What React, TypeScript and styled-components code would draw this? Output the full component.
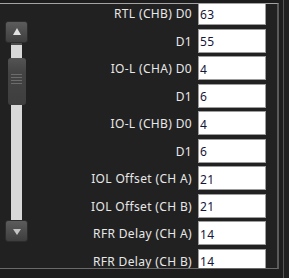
import React from 'react'
import styled, { createGlobalStyle } from 'styled-components'

const GlobalStyle = createGlobalStyle`
  html, body {
    margin: 0;
    padding: 0;
    background: #1d1d1d;
  }
`;

const rows: { label: string; value: string }[] = [
  { label: 'RTL (CHB) D0', value: '63' },
  { label: 'D1', value: '55' },
  { label: 'IO-L (CHA) D0', value: '4' },
  { label: 'D1', value: '6' },
  { label: 'IO-L (CHB) D0', value: '4' },
  { label: 'D1', value: '6' },
  { label: 'IOL Offset (CH A)', value: '21' },
  { label: 'IOL Offset (CH B)', value: '21' },
  { label: 'RFR Delay (CH A)', value: '14' },
  { label: 'RFR Delay (CH B)', value: '14' },
];

const Screen = styled.div`
  display: flex;
  width: 289px;
  height: 278px;
  overflow: hidden;
  background: #1d1d1d;
  font-family: "Noto Sans", "Liberation Sans", sans-serif;
`;

const Panel = styled.div`
  display: flex;
  width: 279px;
  height: 266px;
  margin-top: 3px;
  box-sizing: border-box;
  background: #212121;
  border-top: 1px solid #a4a4a4;
  border-bottom: 1px solid #6a6a6a;
  border-right: 2px solid #5a5a5a;
`;

const Gutter = styled.div`
  width: 5px;
  margin-left: 4px;
  border-left: 1px solid #555;
  background: #1f1f1f;
`;

const ScrollBar = styled.div`
  display: flex;
  flex-direction: column;
  align-items: center;
  width: 23px;
  margin: 17px 0 0 5px;
  flex-shrink: 0;
`;

const ArrowButton = styled.div<{ $down?: boolean }>`
  display: flex;
  align-items: center;
  justify-content: center;
  width: 23px;
  height: 22px;
  box-sizing: border-box;
  border-radius: 3px;
  border: 1px solid #2c2c2c;
  background: linear-gradient(#5c5c5c, #3e3e3e);

  &::after {
    content: '';
    width: 0;
    height: 0;
    border-left: 4px solid transparent;
    border-right: 4px solid transparent;
    ${p => (p.$down
      ? 'border-top: 6px solid #c4c4c4; margin-top: 1px;'
      : 'border-bottom: 7px solid #e2e2e2; margin-top: -1px;')}
  }
`;

const Track = styled.div`
  display: flex;
  flex-direction: column;
  align-items: center;
  width: 11px;
  height: 177px;
  box-sizing: border-box;
  padding-top: 13px;
  background: #d8d8d8;
  border-top: 2px solid #4a4a4a;
`;

const Thumb = styled.div`
  display: flex;
  flex-direction: column;
  align-items: center;
  gap: 2px;
  flex-shrink: 0;
  width: 18px;
  height: 47px;
  box-sizing: border-box;
  padding-top: 16px;
  border-radius: 3px;
  background: linear-gradient(#545454, #444 30%, #3e3e3e);
`;

const Grip = styled.div`
  width: 11px;
  height: 1px;
  background: #6c6c6c;
`;

const Viewport = styled.div`
  flex: 1;
  overflow: hidden;
`;

const Form = styled.div`
  display: grid;
  grid-template-columns: 1fr 68px;
  grid-auto-rows: 24px;
  column-gap: 6px;
  row-gap: 3.5px;
  margin-top: -3px;
  padding-right: 11px;
`;

const Label = styled.span`
  align-self: center;
  text-align: right;
  font-size: 12px;
  line-height: 14px;
  letter-spacing: 0.35px;
  margin-top: 2px;
  color: #e8e8e8;
  white-space: nowrap;
`;

const ValueInput = styled.input`
  width: 68px;
  height: 24px;
  box-sizing: border-box;
  margin: 0;
  padding: 2px 0 0 1px;
  border: 1px solid #9c9c9c;
  background: #fff;
  font-family: "Noto Sans", "Liberation Sans", sans-serif;
  font-size: 12px;
  letter-spacing: 0.35px;
  color: #16163a;
  outline: none;
`;

export default function App() {
  return (
    <Screen>
      <GlobalStyle />
      <Panel>
        <ScrollBar>
          <ArrowButton />
          <Track>
            <Thumb>
              <Grip />
              <Grip />
              <Grip />
              <Grip />
            </Thumb>
          </Track>
          <ArrowButton $down />
        </ScrollBar>
        <Viewport>
          <Form>
            {rows.map((row, i) => (
              <React.Fragment key={i}>
                <Label>{row.label}</Label>
                <ValueInput defaultValue={row.value} readOnly />
              </React.Fragment>
            ))}
          </Form>
        </Viewport>
      </Panel>
      <Gutter />
    </Screen>
  );
}
